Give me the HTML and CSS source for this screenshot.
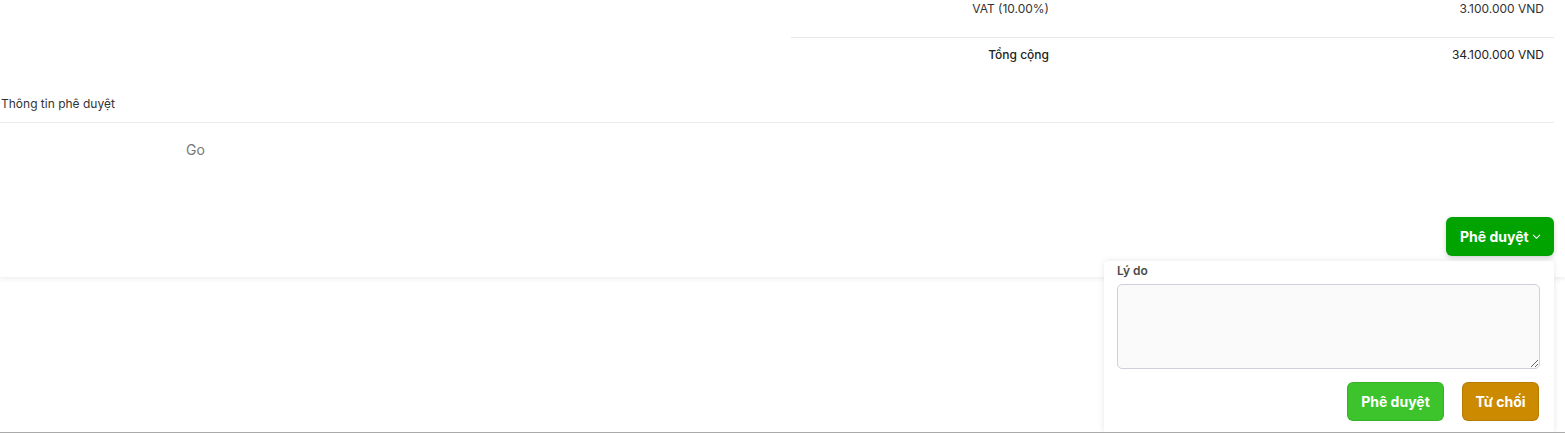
FILE: index.html
```html
<!DOCTYPE html>
<html lang="vi">
<head>
<meta charset="utf-8">
<title>Phê duyệt</title>
<link rel="stylesheet" href="styles.css">
</head>
<body>
<div class="page">
  <section class="card">
    <div class="summary">
      <div class="sum-row first">
        <div class="sum-label">VAT (10.00%)</div>
        <div class="sum-value">3.100.000 VND</div>
      </div>
      <div class="sum-row total">
        <div class="sum-label">Tổng cộng</div>
        <div class="sum-value">34.100.000 VND</div>
      </div>
    </div>
    <div class="section-title">Thông tin phê duyệt</div>
    <div class="approval-body">Go</div>
    <div class="actions">
      <button class="btn-main">Phê duyệt
        <svg width="9" height="9" viewBox="0 0 10 10"><path d="M1.5 3.5 L5 7 L8.5 3.5" fill="none" stroke="#fff" stroke-width="1.2" stroke-linecap="round" stroke-linejoin="round"/></svg>
      </button>
    </div>
  </section>
  <div class="popover">
    <label class="pop-label">Lý do</label>
    <textarea class="pop-text"></textarea>
    <div class="pop-actions">
      <button class="btn approve">Phê duyệt</button>
      <button class="btn reject">Từ chối</button>
    </div>
  </div>
</div>
<footer class="footer"></footer>
</body>
</html>
```

FILE: styles.css
```css
* { box-sizing: border-box; }
html, body { margin: 0; padding: 0; }
body {
  font-family: Inter, "Noto Sans", sans-serif;
  background: #ffffff;
  color: #333;
  overflow: hidden;
}
.page {
  position: relative;
  height: 432px;
}
.card {
  background: #fff;
  padding: 0 11px 21px 0;
  box-shadow: 0 2px 5px rgba(0,0,0,0.07);
}
.summary {
  margin-left: 791px;
  font-size: 12px;
  line-height: 18px;
  color: #333;
}
.sum-row {
  display: flex;
}
.sum-row.first {
  height: 38px;
  border-bottom: 1px solid #e8e8e8;
}
.sum-row.total {
  padding-top: 8px;
  color: #222;
}
.sum-row.total .sum-label {
  font-weight: 500;
}
.sum-label {
  width: 258px;
  text-align: right;
}
.sum-value {
  flex: 1;
  text-align: right;
  padding-right: 10px;
  font-weight: 400;
}
.section-title {
  margin-top: 31px;
  padding: 0 0 9px 1px;
  font-size: 12px;
  line-height: 18px;
  color: #333;
  border-bottom: 1px solid #ebebeb;
}
.approval-body {
  padding: 18px 0 0 186px;
  font-size: 14px;
  line-height: 18px;
  color: #777;
  height: 94px;
}
.actions {
  display: flex;
  justify-content: flex-end;
}
.btn-main {
  display: flex;
  align-items: center;
  gap: 3px;
  height: 39px;
  width: 108px;
  padding: 0 0 0 14px;
  border: none;
  border-radius: 6px;
  background: #00a300;
  color: #fff;
  font-family: Inter, sans-serif;
  font-size: 14px;
  font-weight: 700;
  box-shadow: 0 2px 5px rgba(0,0,0,0.18);
}
.popover {
  position: absolute;
  left: 1104px;
  top: 261px;
  width: 450px;
  height: 171px;
  background: #fff;
  border-radius: 4px 4px 0 0;
  box-shadow: 0 0 6px rgba(0,0,0,0.1);
  padding: 1px 14px 0 13px;
  display: flex;
  flex-direction: column;
}
.pop-label {
  font-size: 12px;
  line-height: 18px;
  font-weight: 600;
  color: #4a4a4a;
}
.pop-text {
  margin-top: 4px;
  width: 423px;
  height: 85px;
  background: #fafafa;
  border: 1px solid #cfd0d8;
  border-radius: 5px;
  resize: vertical;
  font-family: Inter, sans-serif;
}
.pop-actions {
  display: flex;
  justify-content: flex-end;
  gap: 18px;
  margin-top: 13px;
  padding-right: 1px;
}
.btn {
  height: 39px;
  border-radius: 6px;
  border: 1px solid rgba(0,0,0,0.1);
  color: #fff;
  font-family: Inter, sans-serif;
  font-size: 14px;
  font-weight: 700;
}
.approve {
  width: 97px;
  background: #3dc42c;
}
.reject {
  width: 77px;
  background: #cc8a00;
}
.footer {
  border-top: 1px solid #aaa;
  height: 1px;
  position: relative;
  z-index: 2;
}
```
